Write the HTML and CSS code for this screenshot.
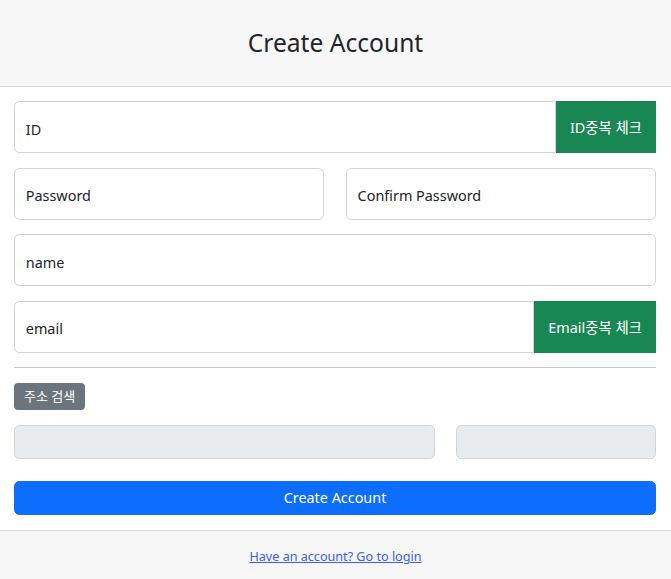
FILE: index.html
```html
<!DOCTYPE html>
<html lang="ko">
<head>
<meta charset="utf-8">
<title>Create Account</title>
<link rel="stylesheet" href="styles.css">
</head>
<body>
<div class="card">
  <div class="card-header">
    <h3 class="title">Create Account</h3>
  </div>
  <div class="card-body">
    <div class="input-group field">
      <input class="control control-lg grow" type="text" placeholder="ID">
      <button class="btn btn-success" type="button">ID중복 체크</button>
    </div>
    <div class="row field">
      <input class="control control-lg" type="password" placeholder="Password">
      <input class="control control-lg" type="password" placeholder="Confirm Password">
    </div>
    <div class="field">
      <input class="control control-lg full" type="text" placeholder="name">
    </div>
    <div class="input-group field">
      <input class="control control-lg grow" type="email" placeholder="email">
      <button class="btn btn-success" type="button">Email중복 체크</button>
    </div>
    <hr class="divider">
    <div class="field">
      <button class="btn btn-secondary btn-sm" type="button">주소 검색</button>
    </div>
    <div class="row row-addr">
      <input class="control control-ro" type="text" readonly>
      <input class="control control-ro" type="text" readonly>
    </div>
    <button class="btn btn-primary btn-block" type="button">Create Account</button>
  </div>
  <div class="card-footer">
    <a class="small-link" href="#">Have an account? Go to login</a>
  </div>
</div>
</body>
</html>
```
FILE: styles.css
```css
* { box-sizing: border-box; }
html, body { margin: 0; padding: 0; background: #fff; }
body {
  font-family: "Noto Sans", "Noto Sans CJK KR", sans-serif;
  font-size: 14.4px;
  color: #212529;
}
.card {
  display: flex;
  flex-direction: column;
  min-height: 600px;
  background: #fff;
}
.card-header {
  background: #f7f7f7;
  border-bottom: 1px solid #dadada;
  height: 87px;
  display: flex;
  align-items: center;
  justify-content: center;
}
.title {
  margin: 0;
  font-size: 24.6px;
  font-weight: 400;
  line-height: 1.2;
  color: #212529;
}
.card-body {
  padding: 14px 15px 14.4px 14px;
}
.field { margin-bottom: 14.4px; }
.input-group { display: flex; }
.row {
  display: grid;
  grid-template-columns: 1fr 1fr;
  column-gap: 21.6px;
}
.row-addr {
  grid-template-columns: calc((100% + 21.6px) * 2 / 3 - 21.6px) 1fr;
  margin-bottom: 22px;
}
.control {
  display: block;
  font-family: inherit;
  font-size: 14.4px;
  color: #212529;
  background: #fff;
  border: 1px solid #ced4da;
  border-radius: 5.4px;
  padding: 0 10.8px;
  outline: none;
  min-width: 0;
  width: 100%;
}
.control::placeholder { color: #212529; opacity: 1; }
.control-lg { height: 52.2px; padding-top: 4px; }
.control-ro { height: 34.4px; background: #e9ecef; }
.grow {
  flex: 1;
  border-top-right-radius: 0;
  border-bottom-right-radius: 0;
}
.btn {
  font-family: inherit;
  border: 1px solid transparent;
  color: #fff;
  cursor: pointer;
  line-height: 1.5;
}
.btn-success {
  background: #198754;
  border-color: #198754;
  font-size: 14.4px;
  padding: 2px 13px 0;
  border-radius: 0;
}
.btn-secondary { background: #6c757d; border-color: #6c757d; }
.btn-sm {
  font-size: 13px;
  padding: 1px 9px 0;
  border-radius: 3.6px;
  height: 27.5px;
}
.btn-primary {
  background: #0d6efd;
  border-color: #0d6efd;
  font-size: 14.4px;
  border-radius: 5.4px;
  height: 34.4px;
  padding-top: 1px;
}
.btn-block { display: block; width: 100%; }
.divider {
  border: 0;
  border-top: 1px solid #c8c8c8;
  margin: 0.8px 0 14.4px;
}
.card-footer {
  flex: 1;
  background: #f7f7f7;
  border-top: 1px solid #dadada;
  padding: 14.4px 14px;
  text-align: center;
  line-height: 1.5;
}
.small-link {
  font-size: 12.6px;
  color: #3b5bfd;
  text-decoration: underline;
}
```
